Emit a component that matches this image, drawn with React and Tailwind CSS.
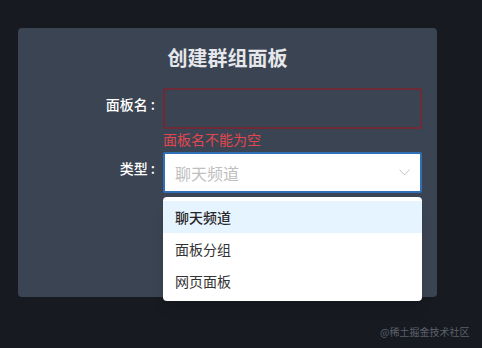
import React from "react";

const options = ["聊天频道", "面板分组", "网页面板"];

const App = () => {
  return (
    <div
      className="relative w-[482px] h-[348px] bg-[#171a21] pt-[28px] pl-[18px]"
      style={{ fontFamily: '"Noto Sans CJK SC", "Noto Sans", sans-serif' }}
    >
      <div className="w-[419px] h-[269px] rounded bg-[#3b4452] pt-[16px]">
        <h2 className="text-center text-[20px] leading-[28px] font-bold text-[#e5e7eb]">创建群组面板</h2>

        <div className="mt-[16px] flex items-start">
          <label className="w-[139px] pr-[2px] flex justify-end text-[14px] leading-[32px] font-medium text-white">
            面板名<span className="ml-[3px]">:</span>
          </label>
          <div className="ml-[6px] w-[259px]">
            <div className="h-[41px] border-2 border-[#6f2a37] rounded-[2px] bg-[#3b4452]" />
            <p className="text-[14px] leading-[20px] text-[#e2474f]">面板名不能为空</p>
          </div>
        </div>

        <div className="mt-[3px] flex items-start">
          <label className="w-[139px] pr-[2px] flex justify-end text-[14px] leading-[32px] font-medium text-white">
            类型<span className="ml-[3px]">:</span>
          </label>
          <div className="ml-[6px] w-[259px] h-[41px] border-2 border-[#2f6fb8] rounded-[2px] bg-white flex items-center justify-between pl-[10px] pr-[10px]">
            <span className="text-[16px] text-[#bfbfbf]">聊天频道</span>
            <svg width="11" height="7" viewBox="0 0 11 7" fill="none">
              <path d="M0.5 0.5 L5.5 6 L10.5 0.5" stroke="#c4c4c4" strokeWidth="1" />
            </svg>
          </div>
        </div>
      </div>

      <div className="absolute left-[163px] top-[197px] w-[259px] rounded bg-white py-[4px] shadow-lg">
        {options.map((o, i) => (
          <div
            key={o}
            className={
              i === 0
                ? "h-[32px] flex items-center pl-[12px] text-[14px] font-medium text-[#262626] bg-[#e6f4ff]"
                : "h-[32px] flex items-center pl-[12px] text-[14px] text-[#333333]"
            }
          >
            {o}
          </div>
        ))}
      </div>

      <div className="absolute left-[380px] top-[324px] text-[10px] leading-[16px] text-[#5b606b]">@稀土掘金技术社区</div>
    </div>
  );
};

export default App;
